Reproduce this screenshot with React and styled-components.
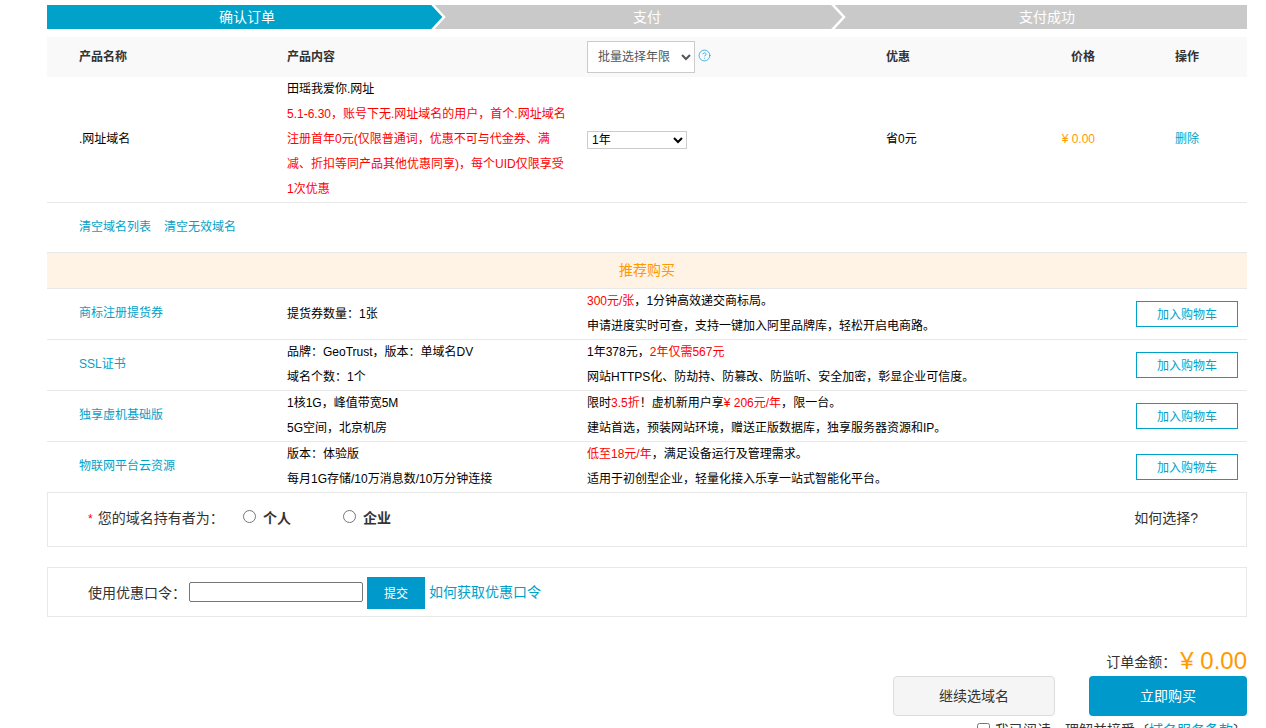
import React from "react";
import styled, { createGlobalStyle } from "styled-components";
import { CircleHelp } from "lucide-react";

const BLUE = "#00a2ca";
const BORDER = "#e8e8e8";

// full-width punctuation
const C = "\uFF0C";
const CL = "\uFF1A";
const EX = "\uFF01";

const GlobalStyle = createGlobalStyle`
    html, body {
        margin: 0;
        padding: 0;
        background: #fff;
        overflow: hidden;
        height: 728px;
    }
    body {
        font-family: "Liberation Sans", "Noto Sans CJK SC", sans-serif;
        font-size: 12px;
        color: #333;
    }
`;

const Page = styled.div`
    width: 1200px;
    margin-left: 47px;
    padding-top: 5px;
`;

const Steps = styled.div`
    display: flex;
    height: 24px;
    margin-bottom: 8px;
`;

const Step = styled.div`
    position: relative;
    flex: 1;
    display: flex;
    align-items: center;
    justify-content: center;
    padding-bottom: 2px;
    box-sizing: border-box;
    background: ${(p) => (p.$active ? BLUE : "#c9c9c9")};
    color: #fff;
    font-size: 14px;
`;

const StepArrow = styled.svg`
    position: absolute;
    top: 0;
    right: 0;
    width: 16px;
    height: 24px;
`;

const HeadRow = styled.div`
    display: grid;
    grid-template-columns: 240px 300px 299px 1fr 95px 152px;
    align-items: center;
    height: 40px;
    box-sizing: border-box;
    padding-bottom: 3px;
    background: #f9f9f9;
    font-weight: bold;
    color: #333;
`;

const ItemRow = styled.div`
    display: grid;
    grid-template-columns: 240px 300px 299px 1fr 95px 152px;
    align-items: center;
    border-bottom: 1px solid ${BORDER};
    color: #000;
    line-height: 25px;
`;

const NameCell = styled.div`
    padding-left: 32px;
`;

const RecName = styled(NameCell)`
    padding-bottom: 2px;
`;

const ContentCell = styled.div`
    width: 282px;
`;

const RedText = styled.span`
    color: #f00;
`;

const SelectCell = styled.div`
    display: flex;
    align-items: flex-start;
    gap: 3px;
    margin-top: 3px;
`;

const BatchSelect = styled.select`
    width: 108px;
    height: 32px;
    padding-left: 6px;
    border: 1px solid #ccc;
    background: #fff;
    color: #555;
    font: 12px "Liberation Sans", "Noto Sans CJK SC", sans-serif;
`;

const HelpIcon = styled(CircleHelp)`
    width: 13px;
    height: 13px;
    margin-top: 8px;
    color: #2ea7e0;
`;

const YearSelect = styled.select`
    display: block;
    width: 100px;
    height: 18px;
    margin-top: 1px;
    border: 1px solid #ccc;
    background: #fff;
    color: #000;
    font: 12px "Liberation Sans", "Noto Sans CJK SC", sans-serif;
`;

const PriceCell = styled.div`
    text-align: right;
    color: ${(p) => (p.$plain ? "inherit" : "#f90")};
`;

const ActionCell = styled.div`
    padding-left: 80px;
`;

const Link = styled.a`
    color: ${BLUE};
    text-decoration: none;
`;

const ClearBar = styled.div`
    display: flex;
    gap: 13px;
    align-items: center;
    height: 49px;
    box-sizing: border-box;
    padding: 0 0 5px 32px;
`;

const RecommendTitle = styled.div`
    height: 35px;
    line-height: 34px;
    text-align: center;
    font-size: 14px;
    color: #f90;
    background: #fff3e5;
    border-top: 1px solid ${BORDER};
    border-bottom: 1px solid ${BORDER};
`;

const RecRow = styled.div`
    display: grid;
    grid-template-columns: 240px 300px 1fr 111px;
    align-items: center;
    height: 50px;
    border-bottom: 1px solid ${BORDER};
    color: #000;
    line-height: 25px;
`;

const AddButton = styled.button`
    width: 102px;
    height: 26px;
    padding: 0 0 2px;
    border: 1px solid ${BLUE};
    background: #fff;
    color: ${BLUE};
    font: 12px "Liberation Sans", "Noto Sans CJK SC", sans-serif;
`;

const HolderBox = styled.div`
    display: flex;
    align-items: center;
    box-sizing: border-box;
    height: 54px;
    padding: 0 48px 6px 40px;
    border: 1px solid ${BORDER};
    border-top: 0;
    font-size: 14px;
    color: #333;
`;

const Star = styled.span`
    font-size: 12px;
    color: #f00;
    margin-right: 5px;
`;

const HolderLabel = styled.span`
    width: 155px;
`;

const RadioLabel = styled.label`
    display: flex;
    align-items: center;
    gap: 7px;
    width: 100px;
    font-size: 14px;
    font-weight: bold;
    color: #333;
`;

const Radio = styled.input`
    width: 13px;
    height: 13px;
    margin: 0;
`;

const HowTo = styled.span`
    margin-left: auto;
    font-size: 14px;
`;

const CouponBox = styled.div`
    display: flex;
    align-items: center;
    height: 50px;
    box-sizing: border-box;
    margin-top: 20px;
    padding-left: 40px;
    border: 1px solid ${BORDER};
    font-size: 14px;
`;

const CouponLabel = styled.span`
    width: 101px;
`;

const CouponInput = styled.input`
    box-sizing: border-box;
    width: 174px;
    height: 20px;
    margin: 0 4px 0 0;
    border: 1px solid #767676;
    border-radius: 2px;
`;

const SubmitButton = styled.button`
    width: 58px;
    height: 32px;
    margin: 2px 4px 0 0;
    padding: 0 0 2px;
    border: 0;
    background: #09c;
    color: #fff;
    font: 12px "Liberation Sans", "Noto Sans CJK SC", sans-serif;
`;

const CouponLink = styled(Link)`
    font-size: 14px;
    margin-top: -2px;
`;

const TotalRow = styled.div`
    display: flex;
    justify-content: flex-end;
    align-items: flex-end;
    height: 30px;
    margin-top: 29px;
`;

const TotalLabel = styled.span`
    margin-right: 4px;
    font-size: 14px;
    line-height: 28px;
`;

const TotalValue = styled.span`
    font-size: 24px;
    line-height: 30px;
    color: #f90;
`;

const ActionRow = styled.div`
    display: flex;
    justify-content: flex-end;
    gap: 34px;
`;

const ContinueButton = styled.button`
    width: 162px;
    height: 40px;
    padding: 0 0 2px;
    border: 1px solid #ddd;
    border-radius: 4px;
    background: #f5f5f5;
    color: #333;
    font: 14px "Liberation Sans", "Noto Sans CJK SC", sans-serif;
`;

const BuyButton = styled.button`
    width: 158px;
    height: 40px;
    padding: 0 0 2px;
    border: 0;
    border-radius: 4px;
    background: #09c;
    color: #fff;
    font: 14px "Liberation Sans", "Noto Sans CJK SC", sans-serif;
`;

const Agreement = styled.label`
    display: flex;
    justify-content: flex-end;
    align-items: center;
    gap: 5px;
    margin-top: 3px;
    font-size: 14px;
    color: #333;
`;

const CheckBox = styled.input`
    width: 13px;
    height: 13px;
    margin: 0;
`;

const recommendations = [
    {
        name: "商标注册提货券",
        specs: [`提货券数量${CL}1张`],
        lines: [
            <><RedText>300元/张</RedText>{C}1分钟高效递交商标局。</>,
            `申请进度实时可查${C}支持一键加入阿里品牌库${C}轻松开启电商路。`,
        ],
    },
    {
        name: "SSL证书",
        specs: [`品牌${CL}GeoTrust${C}版本${CL}单域名DV`, `域名个数${CL}1个`],
        lines: [
            <>1年378元{C}<RedText>2年仅需567元</RedText></>,
            `网站HTTPS化、防劫持、防篡改、防监听、安全加密${C}彰显企业可信度。`,
        ],
    },
    {
        name: "独享虚机基础版",
        specs: [`1核1G${C}峰值带宽5M`, `5G空间${C}北京机房`],
        lines: [
            <>限时<RedText>3.5折</RedText>{EX}虚机新用户享<RedText>¥ 206元/年</RedText>{C}限一台。</>,
            `建站首选${C}预装网站环境${C}赠送正版数据库${C}独享服务器资源和IP。`,
        ],
    },
    {
        name: "物联网平台云资源",
        specs: [`版本${CL}体验版`, `每月1G存储/10万消息数/10万分钟连接`],
        lines: [
            <><RedText>低至18元/年</RedText>{C}满足设备运行及管理需求。</>,
            `适用于初创型企业${C}轻量化接入乐享一站式智能化平台。`,
        ],
    },
];

function StepItem({ active, arrow, nextGray, children }) {
    return (
        <Step $active={active}>
            {children}
            {arrow && (
                <StepArrow viewBox="0 0 16 24">
                    {nextGray && <polygon points="2,0 16,0 16,24 2,24 12,12" fill="#c9c9c9" />}
                    <polyline points="1,-1 13,12 1,25" fill="none" stroke="#fff" strokeWidth="2.5" />
                </StepArrow>
            )}
        </Step>
    );
}

export default function App() {
    return (
        <Page>
            <GlobalStyle />
            <Steps>
                <StepItem active arrow nextGray>确认订单</StepItem>
                <StepItem arrow>支付</StepItem>
                <StepItem>支付成功</StepItem>
            </Steps>

            <HeadRow>
                <NameCell>产品名称</NameCell>
                <div>产品内容</div>
                <SelectCell>
                    <BatchSelect defaultValue="batch">
                        <option value="batch">批量选择年限</option>
                    </BatchSelect>
                    <HelpIcon strokeWidth={1.6} />
                </SelectCell>
                <div>优惠</div>
                <PriceCell $plain>价格</PriceCell>
                <ActionCell>操作</ActionCell>
            </HeadRow>

            <ItemRow>
                <NameCell>.网址域名</NameCell>
                <ContentCell>
                    田瑶我爱你.网址
                    <br />
                    <RedText>
                        {`5.1-6.30${C}账号下无.网址域名的用户${C}首个.网址域名注册首年0元(仅限普通词${C}优惠不可与代金券、满减、折扣等同产品其他优惠同享)${C}每个UID仅限享受1次优惠`}
                    </RedText>
                </ContentCell>
                <div>
                    <YearSelect defaultValue="1">
                        <option value="1">1年</option>
                    </YearSelect>
                </div>
                <div>省0元</div>
                <PriceCell>¥ 0.00</PriceCell>
                <ActionCell>
                    <Link>删除</Link>
                </ActionCell>
            </ItemRow>

            <ClearBar>
                <Link>清空域名列表</Link>
                <Link>清空无效域名</Link>
            </ClearBar>

            <RecommendTitle>推荐购买</RecommendTitle>

            {recommendations.map((item) => (
                <RecRow key={item.name}>
                    <RecName>
                        <Link>{item.name}</Link>
                    </RecName>
                    <div>
                        {item.specs.map((spec) => (
                            <div key={spec}>{spec}</div>
                        ))}
                    </div>
                    <div>
                        {item.lines.map((line, i) => (
                            <div key={i}>{line}</div>
                        ))}
                    </div>
                    <AddButton>加入购物车</AddButton>
                </RecRow>
            ))}

            <HolderBox>
                <HolderLabel>
                    <Star>*</Star>您的域名持有者为{CL}
                </HolderLabel>
                <RadioLabel>
                    <Radio type="radio" name="holder" />个人
                </RadioLabel>
                <RadioLabel>
                    <Radio type="radio" name="holder" />企业
                </RadioLabel>
                <HowTo>如何选择?</HowTo>
            </HolderBox>

            <CouponBox>
                <CouponLabel>使用优惠口令{CL}</CouponLabel>
                <CouponInput type="text" />
                <SubmitButton>提交</SubmitButton>
                <CouponLink>如何获取优惠口令</CouponLink>
            </CouponBox>

            <TotalRow>
                <TotalLabel>订单金额{CL}</TotalLabel>
                <TotalValue>¥ 0.00</TotalValue>
            </TotalRow>

            <ActionRow>
                <ContinueButton>继续选域名</ContinueButton>
                <BuyButton>立即购买</BuyButton>
            </ActionRow>

            <Agreement>
                <CheckBox type="checkbox" />
                <span>
                    我已阅读、理解并接受〔<Link>域名服务条款</Link>〕
                </span>
            </Agreement>
        </Page>
    );
}
